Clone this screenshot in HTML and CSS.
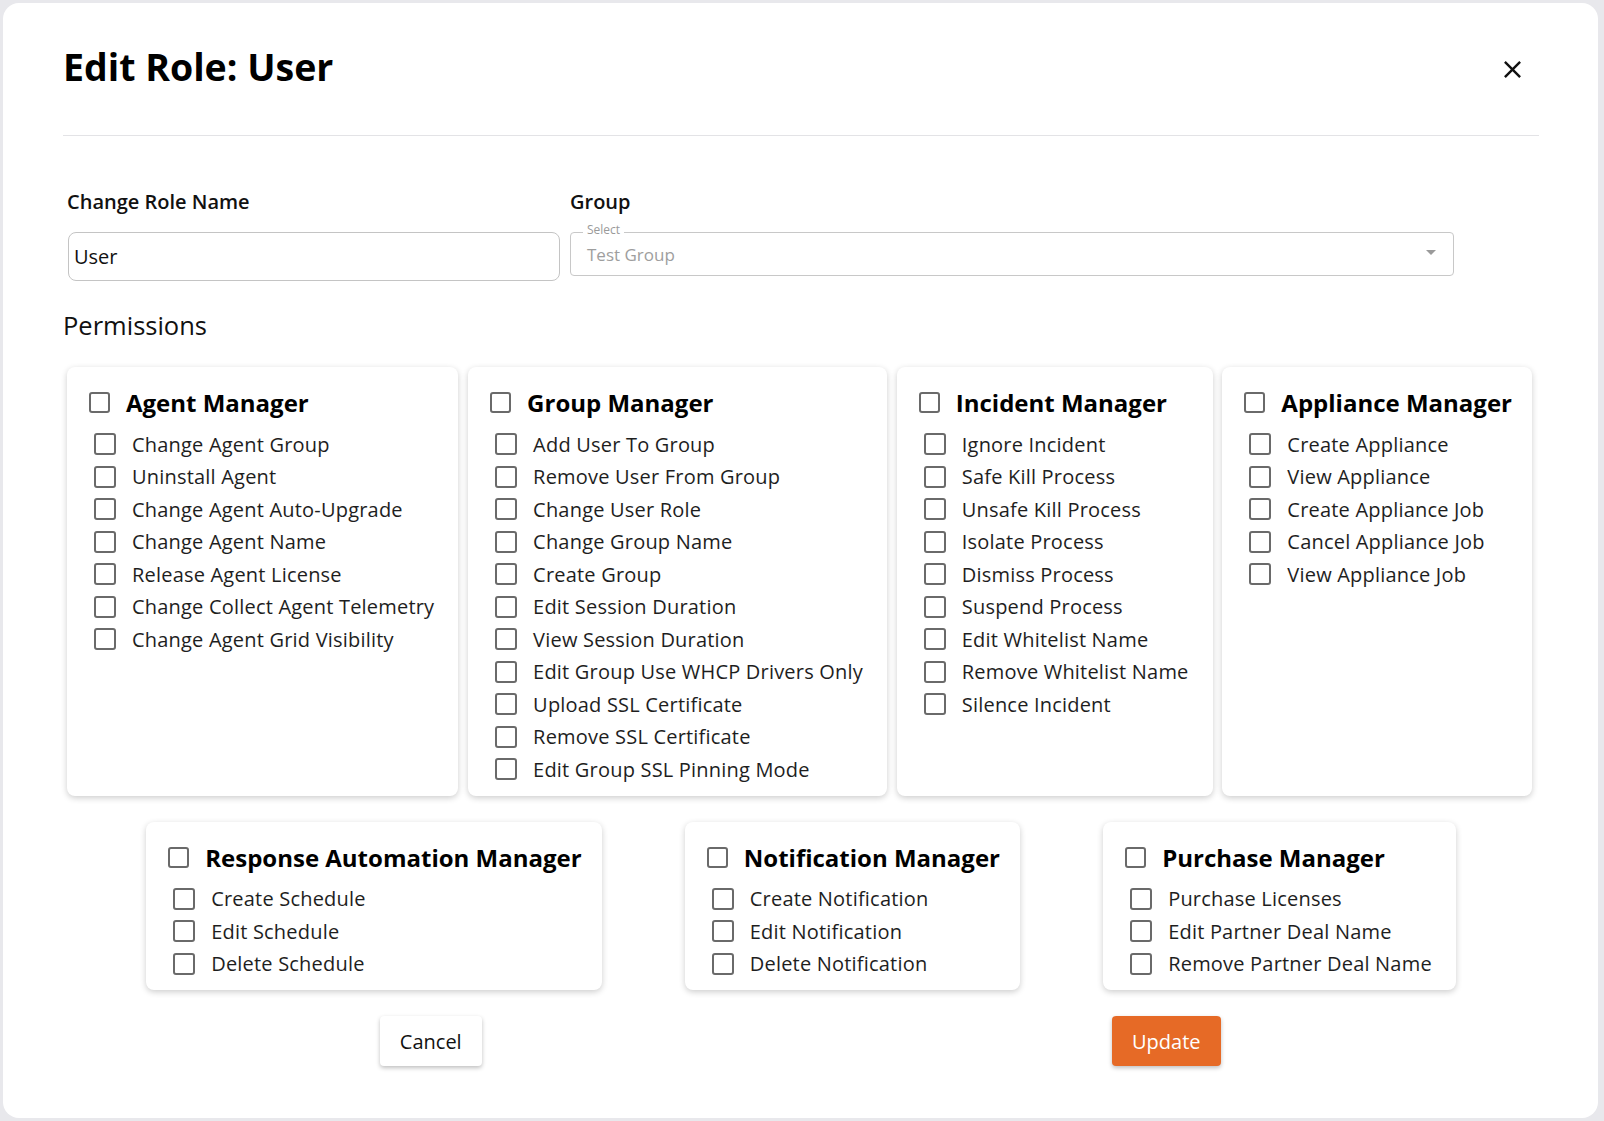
FILE: index.html
```html
<!DOCTYPE html>
<html lang="en">
<head>
    <meta charset="utf-8">
    <meta name="viewport" content="width=device-width, initial-scale=1.0">
    <title>Edit Role: User</title>
    <link rel="stylesheet" href="styles.css">
</head>
<body>
    <div class="dialog">
        <div class="dialog-header">
            <h1 class="dialog-title">Edit Role: User</h1>
            <button class="close-button" aria-label="close">
                <svg viewBox="0 0 24 24" width="29" height="29"><path d="M19 6.41 17.59 5 12 10.59 6.41 5 5 6.41 10.59 12 5 17.59 6.41 19 12 13.41 17.59 19 19 17.59 13.41 12z"/></svg>
            </button>
        </div>

        <div class="form-row">
            <div class="field field-name">
                <label for="role-name">Change Role Name</label>
                <input type="text" id="role-name" class="text-input" value="User">
            </div>
            <div class="field field-group">
                <label>Group</label>
                <div class="select">
                    <span class="select-label">Select</span>
                    <span class="select-value">Test Group</span>
                    <span class="select-arrow"></span>
                </div>
            </div>
        </div>

        <h2 class="section-title">Permissions</h2>

        <!-- 権限カード 1段目 -->
        <div class="card-row card-row-1">
            <div class="card">
                <label class="card-head"><input type="checkbox" class="box box-head"><span>Agent Manager</span></label>
                <label class="item"><input type="checkbox" class="box"><span>Change Agent Group</span></label>
                <label class="item"><input type="checkbox" class="box"><span>Uninstall Agent</span></label>
                <label class="item"><input type="checkbox" class="box"><span>Change Agent Auto-Upgrade</span></label>
                <label class="item"><input type="checkbox" class="box"><span>Change Agent Name</span></label>
                <label class="item"><input type="checkbox" class="box"><span>Release Agent License</span></label>
                <label class="item"><input type="checkbox" class="box"><span>Change Collect Agent Telemetry</span></label>
                <label class="item"><input type="checkbox" class="box"><span>Change Agent Grid Visibility</span></label>
            </div>
            <div class="card">
                <label class="card-head"><input type="checkbox" class="box box-head"><span>Group Manager</span></label>
                <label class="item"><input type="checkbox" class="box"><span>Add User To Group</span></label>
                <label class="item"><input type="checkbox" class="box"><span>Remove User From Group</span></label>
                <label class="item"><input type="checkbox" class="box"><span>Change User Role</span></label>
                <label class="item"><input type="checkbox" class="box"><span>Change Group Name</span></label>
                <label class="item"><input type="checkbox" class="box"><span>Create Group</span></label>
                <label class="item"><input type="checkbox" class="box"><span>Edit Session Duration</span></label>
                <label class="item"><input type="checkbox" class="box"><span>View Session Duration</span></label>
                <label class="item"><input type="checkbox" class="box"><span>Edit Group Use WHCP Drivers Only</span></label>
                <label class="item"><input type="checkbox" class="box"><span>Upload SSL Certificate</span></label>
                <label class="item"><input type="checkbox" class="box"><span>Remove SSL Certificate</span></label>
                <label class="item"><input type="checkbox" class="box"><span>Edit Group SSL Pinning Mode</span></label>
            </div>
            <div class="card">
                <label class="card-head"><input type="checkbox" class="box box-head"><span>Incident Manager</span></label>
                <label class="item"><input type="checkbox" class="box"><span>Ignore Incident</span></label>
                <label class="item"><input type="checkbox" class="box"><span>Safe Kill Process</span></label>
                <label class="item"><input type="checkbox" class="box"><span>Unsafe Kill Process</span></label>
                <label class="item"><input type="checkbox" class="box"><span>Isolate Process</span></label>
                <label class="item"><input type="checkbox" class="box"><span>Dismiss Process</span></label>
                <label class="item"><input type="checkbox" class="box"><span>Suspend Process</span></label>
                <label class="item"><input type="checkbox" class="box"><span>Edit Whitelist Name</span></label>
                <label class="item"><input type="checkbox" class="box"><span>Remove Whitelist Name</span></label>
                <label class="item"><input type="checkbox" class="box"><span>Silence Incident</span></label>
            </div>
            <div class="card">
                <label class="card-head"><input type="checkbox" class="box box-head"><span>Appliance Manager</span></label>
                <label class="item"><input type="checkbox" class="box"><span>Create Appliance</span></label>
                <label class="item"><input type="checkbox" class="box"><span>View Appliance</span></label>
                <label class="item"><input type="checkbox" class="box"><span>Create Appliance Job</span></label>
                <label class="item"><input type="checkbox" class="box"><span>Cancel Appliance Job</span></label>
                <label class="item"><input type="checkbox" class="box"><span>View Appliance Job</span></label>
            </div>
        </div>

        <!-- 権限カード 2段目 -->
        <div class="card-row card-row-2">
            <div class="card">
                <label class="card-head"><input type="checkbox" class="box box-head"><span>Response Automation Manager</span></label>
                <label class="item"><input type="checkbox" class="box"><span>Create Schedule</span></label>
                <label class="item"><input type="checkbox" class="box"><span>Edit Schedule</span></label>
                <label class="item"><input type="checkbox" class="box"><span>Delete Schedule</span></label>
            </div>
            <div class="card">
                <label class="card-head"><input type="checkbox" class="box box-head"><span>Notification Manager</span></label>
                <label class="item"><input type="checkbox" class="box"><span>Create Notification</span></label>
                <label class="item"><input type="checkbox" class="box"><span>Edit Notification</span></label>
                <label class="item"><input type="checkbox" class="box"><span>Delete Notification</span></label>
            </div>
            <div class="card">
                <label class="card-head"><input type="checkbox" class="box box-head"><span>Purchase Manager</span></label>
                <label class="item"><input type="checkbox" class="box"><span>Purchase Licenses</span></label>
                <label class="item"><input type="checkbox" class="box"><span>Edit Partner Deal Name</span></label>
                <label class="item"><input type="checkbox" class="box"><span>Remove Partner Deal Name</span></label>
            </div>
        </div>

        <div class="actions">
            <div class="action-cell"><button class="btn btn-cancel">Cancel</button></div>
            <div class="action-cell"><button class="btn btn-update">Update</button></div>
        </div>
    </div>
</body>
</html>
```

FILE: styles.css
```css
/* ページ全体 */
body {
    margin: 0;
    background-color: #e8e8ec;
    font-family: "Open Sans", "Noto Sans", sans-serif;
    color: #1a1a1a;
}

/* ダイアログ */
.dialog {
    margin: 3px 6px 4px 3px;
    width: 1595px;
    box-sizing: border-box;
    padding: 0 59px 52px 60px;
    background-color: #fff;
    border-radius: 16px;
}

.dialog-header {
    display: flex;
    align-items: center;
    justify-content: space-between;
    padding-top: 36px;
    padding-bottom: 40px;
    border-bottom: 1px solid #e3e3e6;
}

.dialog-title {
    margin: 0;
    font-size: 37.5px;
    font-weight: 700;
    line-height: 56px;
    color: #000;
}

.close-button {
    border: none;
    background: none;
    padding: 0;
    margin-right: 12px;
    margin-top: 4px;
    display: flex;
    cursor: pointer;
}

.close-button svg {
    fill: #111;
}

/* 入力フォーム */
.form-row {
    display: flex;
    margin-top: 52px;
}

.field label {
    display: block;
    font-size: 20px;
    font-weight: 600;
    line-height: 27px;
    margin-bottom: 17px;
    color: #111;
}

.field-name {
    width: 492px;
    margin-left: 5px;
}

.field-name label {
    margin-left: -1px;
}

.field-group {
    width: 884px;
    margin-left: 10px;
}

.text-input {
    display: block;
    width: 100%;
    height: 49px;
    box-sizing: border-box;
    border: 1px solid #c4c4c4;
    border-radius: 8px;
    padding: 0 5px;
    font-family: inherit;
    font-size: 20px;
    color: #111;
}

.select {
    position: relative;
    display: flex;
    align-items: center;
    height: 44px;
    box-sizing: border-box;
    border: 1px solid #c8c8c8;
    border-radius: 4px;
    padding: 0 17px 0 16px;
}

.select-label {
    position: absolute;
    top: -11px;
    left: 12px;
    padding: 0 4px;
    background-color: #fff;
    font-size: 12px;
    line-height: 16px;
    color: #9a9a9a;
}

.select-value {
    font-size: 17px;
    color: #9e9e9e;
}

.select-arrow {
    margin-left: auto;
    width: 0;
    height: 0;
    border-left: 5px solid transparent;
    border-right: 5px solid transparent;
    border-top: 5px solid #9a9a9a;
    margin-top: -4px;
}

/* 権限 */
.section-title {
    margin: 27px 0 25px;
    font-size: 25.5px;
    font-weight: 500;
    line-height: 34px;
    color: #111;
}

.card-row {
    display: flex;
    justify-content: space-evenly;
}

.card-row-1 {
    justify-content: space-between;
    padding: 0 7px 0 4px;
}

.card-row-2 {
    margin-top: 26px;
}

.card {
    display: flex;
    flex-direction: column;
    padding: 19px 20px 10px 22px;
    background-color: #fff;
    border-radius: 8px;
    box-shadow: 0 2px 6px rgba(0, 0, 0, 0.2);
}

.card-head {
    display: flex;
    align-items: center;
    height: 33px;
    margin-bottom: 9px;
    font-size: 24px;
    font-weight: 700;
    color: #000;
    white-space: nowrap;
}

.item {
    display: flex;
    align-items: center;
    height: 32.5px;
    margin: 0 4px 0 5px;
    font-size: 20px;
    letter-spacing: 0.2px;
    color: #1e1e1e;
    white-space: nowrap;
}

/* チェックボックス */
.box {
    appearance: none;
    -webkit-appearance: none;
    margin: 0 16px 0 0;
    width: 22px;
    height: 22px;
    box-sizing: border-box;
    border: 2.5px solid #6a6a6a;
    border-radius: 3px;
    background-color: #fff;
    flex-shrink: 0;
}

.box-head {
    width: 21px;
    height: 21px;
    margin-right: 16px;
}

/* ボタン */
.actions {
    display: flex;
    margin-top: 26px;
    padding-right: 5px;
}

.action-cell {
    flex: 1;
    display: flex;
    justify-content: center;
}

.btn {
    height: 50px;
    border: none;
    border-radius: 4px;
    padding: 0 20px;
    font-family: inherit;
    font-size: 20px;
    box-shadow: 0 2px 4px rgba(0, 0, 0, 0.25);
    cursor: pointer;
}

.btn-cancel {
    background-color: #fff;
    color: #111;
}

.btn-update {
    background-color: #e66a26;
    color: #fff;
}
```
